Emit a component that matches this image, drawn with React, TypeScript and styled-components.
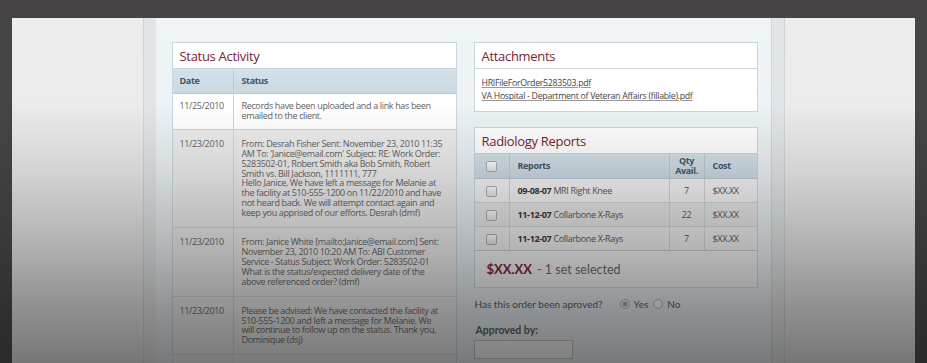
import styled, { createGlobalStyle } from 'styled-components';

const GlobalStyle = createGlobalStyle`
    html, body { margin: 0; padding: 0; }
    body {
        width: 927px;
        height: 363px;
        overflow: hidden;
        background: #464444;
        font-family: 'Open Sans', 'Noto Sans', sans-serif;
    }
`;

const maroon = '#7b2138';
const line = '#c9d6df';

const Frame = styled.div`
    position: relative;
    height: 363px;
    padding: 18px 12px 0;
    box-sizing: border-box;
    background: #464444;
    overflow: hidden;
`;
const Shell = styled.div`
    display: flex;
    height: 100%;
`;
const SidePane = styled.div`
    flex: 1;
    background: linear-gradient(180deg, #ededed, #e6e6e6);
`;
const Rail = styled.div<{ $right?: boolean }>`
    width: 12px;
    background: #e3e4e5;
    border-left: 1px solid #d2d3d4;
    border-right: ${(p) => (p.$right ? '1px solid #d2d3d4' : 'none')};
`;
const Content = styled.div`
    width: 615px;
    box-sizing: border-box;
    padding: 24px 13px 0 16px;
    background: linear-gradient(180deg, #eff4f7, #e6ecf0);
    display: grid;
    grid-template-columns: 285px 284px;
    column-gap: 17px;
    align-items: start;
`;
const Column = styled.div`
    display: flex;
    flex-direction: column;
    gap: 15px;
`;
const Card = styled.div`
    background: #fff;
    border: 1px solid ${line};
`;
const CardTitle = styled.h2`
    margin: 0;
    height: 25px;
    line-height: 26px;
    padding: 0 7px;
    font-size: 13px;
    font-weight: 400;
    letter-spacing: -0.3px;
    color: ${maroon};
    border-bottom: 1px solid ${line};
`;
const Table = styled.table`
    width: 100%;
    border-collapse: collapse;
    table-layout: fixed;
    font-size: 9px;
    letter-spacing: -0.35px;
`;
const Th = styled.th<{ $w?: number; $center?: boolean }>`
    width: ${(p) => (p.$w ? `${p.$w}px` : 'auto')};
    height: 24px;
    padding: 0 8px;
    background: linear-gradient(180deg, #d4e1e9, #cad8e2);
    color: #3e566a;
    font-weight: 700;
    text-align: ${(p) => (p.$center ? 'center' : 'left')};
    line-height: 10px;
    border-left: 1px solid #b9cad6;
    border-bottom: 1px solid #b9cad6;
    &:first-child { border-left: none; }
`;
const Row = styled.tr<{ $shade?: string }>`
    background: ${(p) => p.$shade || '#fff'};
`;
const StatusTd = styled.td`
    padding: 9px 8px;
    vertical-align: top;
    color: #626262;
    line-height: 9.9px;
    white-space: nowrap;
    border-left: 1px solid #d2d4d6;
    border-top: 1px solid #d2d4d6;
    &:first-child { border-left: none; padding-left: 7px; }
    tr:first-child > & { padding-top: 7px; padding-bottom: 8px; }
`;
const ReportTd = styled.td<{ $center?: boolean }>`
    height: 23px;
    padding: 0 8px;
    vertical-align: middle;
    color: #555;
    white-space: nowrap;
    text-align: ${(p) => (p.$center ? 'center' : 'left')};
    border-left: 1px solid #d2d4d6;
    border-top: 1px solid #d2d4d6;
    &:first-child { border-left: none; }
`;
const Code = styled.b`
    color: #333;
`;
const Links = styled.div`
    padding: 9px 7px;
    display: flex;
    flex-direction: column;
    gap: 2px;
    font-size: 8.8px;
    letter-spacing: -0.3px;
`;
const FileLink = styled.a`
    color: #444;
    text-decoration: underline;
    text-decoration-color: #999;
    line-height: 11px;
`;
const Check = styled.span`
    display: inline-block;
    width: 9px;
    height: 9px;
    border: 1px solid #a9adb0;
    border-radius: 2px;
    background: linear-gradient(180deg, #fff, #dfe2e4);
    vertical-align: middle;
`;
const Total = styled.div`
    height: 36px;
    display: flex;
    align-items: center;
    gap: 5px;
    padding: 0 12px;
    border-top: 1px solid #c8cacc;
    background: #f2f2f2;
    color: #666;
    font-family: Lato, sans-serif;
    font-size: 12.5px;
`;
const Price = styled.span`
    color: ${maroon};
    font-weight: 700;
    font-size: 13px;
`;
const Question = styled.div`
    display: flex;
    align-items: center;
    margin-top: -5px;
    padding-left: 1px;
    font-family: Lato, sans-serif;
    font-size: 10px;
    line-height: 12px;
    color: #555;
`;
const RadioGroup = styled.div`
    display: flex;
    gap: 5px;
    margin-left: 17px;
`;
const RadioLabel = styled.label`
    display: flex;
    align-items: center;
    gap: 4px;
`;
const Radio = styled.span<{ $on?: boolean }>`
    width: 8px;
    height: 8px;
    border-radius: 50%;
    border: 1px solid #b3b5b7;
    background: ${(p) => (p.$on ? 'radial-gradient(circle, #9a9a9a 0 2px, #e8e8e8 2.5px)' : '#f4f4f4')};
`;
const FieldLabel = styled.div`
    margin-top: -1px;
    padding-left: 2px;
    font-family: Lato, sans-serif;
    font-size: 10.5px;
    line-height: 13px;
    font-weight: 700;
    color: #555;
`;
const TextBox = styled.div`
    margin-top: -12px;
    width: 97px;
    height: 17px;
    border: 1px solid #bfc1c3;
    background: #f6f6f6;
`;
const Shade = styled.div`
    position: absolute;
    inset: 0;
    pointer-events: none;
    background: linear-gradient(
        180deg,
        rgba(20, 20, 20, 0) 0px,
        rgba(20, 20, 20, 0) 105px,
        rgba(20, 20, 20, 0.1) 170px,
        rgba(20, 20, 20, 0.27) 250px,
        rgba(20, 20, 20, 0.42) 310px,
        rgba(20, 20, 20, 0.53) 363px
    );
`;

const activity = [
    {
        date: '11/25/2010',
        shade: '#fff',
        lines: ['Records have been uploaded and a link has been', 'emailed to the client.'],
    },
    {
        date: '11/23/2010',
        shade: '#ececec',
        lines: [
            'From: Desrah Fisher Sent: November 23, 2010 11:35',
            "AM To: 'Janice@email.com' Subject: RE: Work Order:",
            '5283502-01, Robert Smith aka Bob Smith, Robert',
            'Smith vs. Bill Jackson, 1111111, 777',
            'Hello Janice, We have left a message for Melanie at',
            'the facility at 510-555-1200 on 11/22/2010 and have',
            'not heard back. We will attempt contact again and',
            'keep you apprised of our efforts. Desrah (dmf)',
        ],
    },
    {
        date: '11/23/2010',
        shade: '#ececec',
        lines: [
            'From: Janice White [mailto:Janice@email.com] Sent:',
            'November 23, 2010 10:20 AM To: ABI Customer',
            'Service - Status Subject: Work Order: 5283502-01',
            'What is the status/expected delivery date of the',
            'above referenced order? (dmf)',
        ],
    },
    {
        date: '11/23/2010',
        shade: '#ececec',
        lines: [
            'Please be advised: We have contacted the facility at',
            '510-555-1200 and left a message for Melanie. We',
            'will continue to follow up on the status. Thank you,',
            'Dominique (dsj)',
        ],
    },
    { date: '', shade: '#ececec', lines: [''] },
];

const reports = [
    { code: '09-08-07', name: 'MRI Right Knee', qty: 7, shade: '#f4f4f4' },
    { code: '11-12-07', name: 'Collarbone X-Rays', qty: 22, shade: '#e8e8e8' },
    { code: '11-12-07', name: 'Collarbone X-Rays', qty: 7, shade: '#efefef' },
];

const App = () => {
    return (
        <>
            <GlobalStyle />
            <Frame>
                <Shell>
                    <SidePane />
                    <Rail />
                    <Content>
                        <Card>
                            <CardTitle>Status Activity</CardTitle>
                            <Table>
                                <thead>
                                    <tr>
                                        <Th $w={45} style={{ paddingLeft: 7 }}>
                                            Date
                                        </Th>
                                        <Th>Status</Th>
                                    </tr>
                                </thead>
                                <tbody>
                                    {activity.map((item, i) => (
                                        <Row key={i} $shade={item.shade}>
                                            <StatusTd>{item.date}</StatusTd>
                                            <StatusTd>
                                                {item.lines.map((l, j) => (
                                                    <div key={j}>{l}</div>
                                                ))}
                                            </StatusTd>
                                        </Row>
                                    ))}
                                </tbody>
                            </Table>
                        </Card>
                        <Column>
                            <Card>
                                <CardTitle>Attachments</CardTitle>
                                <Links>
                                    <FileLink href="#">HRIFileForOrder5283503.pdf</FileLink>
                                    <FileLink href="#">VA Hospital - Department of Veteran Affairs (fillable).pdf</FileLink>
                                </Links>
                            </Card>
                            <Card>
                                <CardTitle>Radiology Reports</CardTitle>
                                <Table>
                                    <thead>
                                        <tr>
                                            <Th $w={18} $center>
                                                <Check />
                                            </Th>
                                            <Th>Reports</Th>
                                            <Th $w={34} $center style={{ padding: 0 }}>
                                                Qty
                                                <br />
                                                Avail.
                                            </Th>
                                            <Th $w={36}>Cost</Th>
                                        </tr>
                                    </thead>
                                    <tbody>
                                        {reports.map((r, i) => (
                                            <Row key={i} $shade={r.shade}>
                                                <ReportTd $center>
                                                    <Check />
                                                </ReportTd>
                                                <ReportTd>
                                                    <Code>{r.code}</Code> {r.name}
                                                </ReportTd>
                                                <ReportTd $center>{r.qty}</ReportTd>
                                                <ReportTd>$XX.XX</ReportTd>
                                            </Row>
                                        ))}
                                    </tbody>
                                </Table>
                                <Total>
                                    <Price>$XX.XX</Price> - 1 set selected
                                </Total>
                            </Card>
                            <Question>
                                Has this order been aproved?
                                <RadioGroup>
                                    <RadioLabel>
                                        <Radio $on /> Yes
                                    </RadioLabel>
                                    <RadioLabel>
                                        <Radio /> No
                                    </RadioLabel>
                                </RadioGroup>
                            </Question>
                            <FieldLabel>Approved by:</FieldLabel>
                            <TextBox />
                        </Column>
                    </Content>
                    <Rail $right />
                    <SidePane />
                </Shell>
                <Shade />
            </Frame>
        </>
    );
};

export default App;
